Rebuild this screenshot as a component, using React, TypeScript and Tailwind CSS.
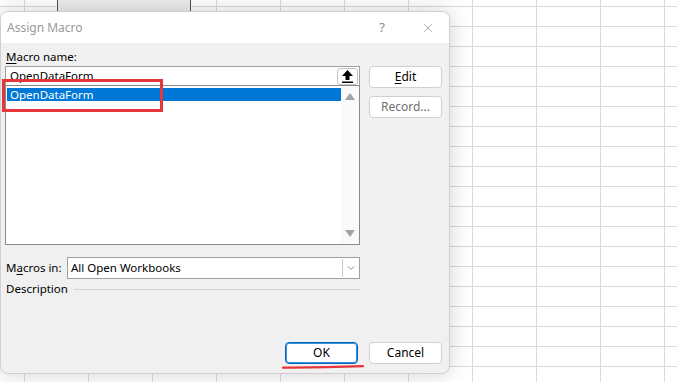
import { ChevronDown, X } from "lucide-react"

function ScrollArrow({ down }: { down?: boolean }) {
  return (
    <svg width="10" height="7" viewBox="0 0 10 7" className="block">
      {down ? <polygon points="0,0 10,0 5,7" fill="#a3a3a3" /> : <polygon points="0,7 10,7 5,0" fill="#a3a3a3" />}
    </svg>
  )
}

function DialogButton({ children, primary, muted }: { children: React.ReactNode; primary?: boolean; muted?: boolean }) {
  return (
    <button
      className={`h-[22px] w-[73px] rounded-[4px] bg-white text-[12px] leading-none ${
        primary ? "border border-[#0067c0] shadow-[inset_0_0_0_1px_#3b8fd9]" : "border border-[#d0d0d0]"
      } ${muted ? "text-[#6e6e6e]" : "text-black"}`}
    >
      {children}
    </button>
  )
}

export default function App() {
  return (
    <div className="relative h-[382px] w-[677px] overflow-hidden bg-white bg-[linear-gradient(to_right,#dadada_1px,transparent_1px),linear-gradient(to_bottom,#dadada_1px,transparent_1px)] bg-[size:64px_20px] bg-[position:24px_6px] font-['Noto_Sans','Open_Sans',sans-serif]">
      {/* form button shape sitting on the sheet */}
      <div className="absolute left-[57px] top-[-10px] h-[21px] w-[134px] border-x border-[#555] bg-[#ececec]" />

      {/* dialog */}
      <div className="absolute left-0 top-[11px] flex h-[363px] w-[450px] flex-col overflow-hidden rounded-[8px] border border-[#cfcfcf] bg-[#f0f0f0] shadow-[0_0_22px_rgba(0,0,0,0.18)]">
        <div className="flex h-[31px] items-center bg-white pl-[6px] pr-[14px] text-[12px] text-[#9a9a9a]">
          <span className="flex-1">Assign Macro</span>
          <span className="mr-[36px] text-[13px] text-[#8a8a8a]">?</span>
          <X size={14} strokeWidth={1.2} className="text-[#8a8a8a]" />
        </div>

        <div className="flex flex-1 flex-col px-[4px] pb-[9px] pt-[5px] text-[11.5px] text-black">
          <div className="h-[18px] pl-[1px] leading-[18px]">
            <span className="underline underline-offset-2">M</span>acro name:
          </div>

          <div className="flex gap-[9px]">
            <div className="w-[355px]">
              <div className="flex h-[20px] items-center border border-[#a0a0a0] bg-white pl-[4px] pr-[1px]">
                <span className="flex-1">OpenDataForm</span>
                <div className="flex h-[17px] w-[21px] items-center justify-center rounded-[3px] border border-[#c4c4c4] bg-white">
                  <svg width="11" height="13" viewBox="0 0 11 13">
                    <polygon points="5.5,0 11,6 7.5,6 7.5,10 3.5,10 3.5,6 0,6" fill="#000" />
                    <rect x="0" y="11.5" width="11" height="1.5" fill="#000" />
                  </svg>
                </div>
              </div>
              <div className="-mt-px flex h-[160px] border border-[#8a8a8a] bg-white">
                <div className="flex-1 pl-[1px] pt-[2px]">
                  <div className="flex h-[13px] items-center bg-[#0078d7] pl-[3px] text-white">OpenDataForm</div>
                </div>
                <div className="flex w-[18px] flex-col items-center justify-between bg-[#fafafa] py-[7px]">
                  <ScrollArrow />
                  <ScrollArrow down />
                </div>
              </div>
            </div>

            <div className="flex flex-col gap-[8px]">
              <DialogButton>
                <span className="underline underline-offset-2">E</span>dit
              </DialogButton>
              <DialogButton muted>Record...</DialogButton>
            </div>
          </div>

          <div className="mt-[12px] flex w-[355px] items-center">
            <span className="w-[62px] pl-[1px]">
              M<span className="underline underline-offset-2">a</span>cros in:
            </span>
            <div className="flex h-[22px] flex-1 items-center border border-[#a0a0a0] bg-white pl-[3px] pr-[1px]">
              <span className="flex-1">All Open Workbooks</span>
              <div className="flex h-[18px] w-[16px] items-center justify-center border-l border-[#c8c8c8]">
                <ChevronDown size={12} strokeWidth={1.3} className="text-[#555]" />
              </div>
            </div>
          </div>

          <div className="mt-[1px] flex w-[355px] items-center">
            <span className="pl-[1px] leading-[18px]">Description</span>
            <div className="ml-[6px] h-px flex-1 bg-[#d6d6d6]" />
          </div>

          <div className="flex-1" />

          <div className="flex justify-end gap-[11px] pr-[3px]">
            <DialogButton primary>OK</DialogButton>
            <DialogButton>Cancel</DialogButton>
          </div>
        </div>
      </div>

      {/* red highlight marks */}
      <div className="absolute left-[2px] top-[79px] h-[33px] w-[161px] border-[3px] border-[#e6353b]" />
      <svg className="absolute left-[282px] top-[364px]" width="82" height="6" viewBox="0 0 82 6">
        <path d="M1 3.6 Q40 3.8 81 2.2" stroke="#e6353b" strokeWidth="2.2" fill="none" strokeLinecap="round" />
      </svg>
    </div>
  )
}
